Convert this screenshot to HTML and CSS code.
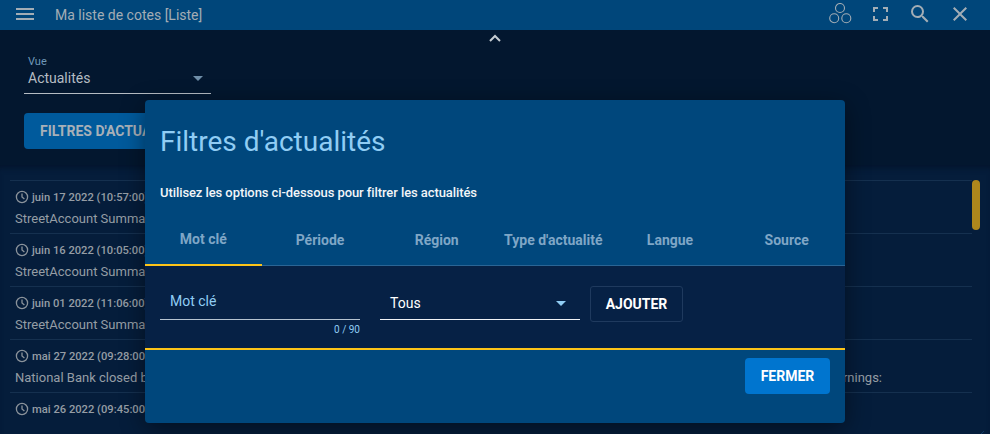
FILE: index.html
```html
<!DOCTYPE html>
<html lang="fr">
<head>
<meta charset="utf-8">
<title>Ma liste de cotes</title>
<link rel="stylesheet" href="styles.css">
</head>
<body>
<div class="app">
  <header class="topbar">
    <svg class="menu" width="20" height="14" viewBox="0 0 20 14"><path d="M1 2h18M1 7h18M1 12h18" stroke="#a3adb5" stroke-width="2"/></svg>
    <span class="topbar-title">Ma liste de cotes [Liste]</span>
    <div class="topbar-icons">
      <svg width="24" height="24" viewBox="0 0 24 24" fill="none" stroke="#a3adb5" stroke-width="1.1"><circle cx="12" cy="5" r="4.5"/><circle cx="6.2" cy="15.2" r="4.5"/><circle cx="18.3" cy="15.2" r="4.5"/></svg>
      <svg width="24" height="24" viewBox="0 0 24 24" fill="none" stroke="#a3adb5" stroke-width="2"><path d="M6 9V5h4M15 5h4v4M19 13v4h-4M10 17H6v-4"/></svg>
      <svg width="24" height="24" viewBox="0 1 24 24" fill="#a3adb5"><path d="M15.5 14h-.79l-.28-.27A6.47 6.47 0 0 0 16 9.5 6.5 6.5 0 1 0 9.5 16c1.61 0 3.09-.59 4.23-1.57l.27.28v.79l5 4.99L20.49 19l-4.99-5zm-6 0C7.01 14 5 11.99 5 9.5S7.01 5 9.5 5 14 7.01 14 9.5 11.99 14 9.5 14z"/></svg>
      <svg width="24" height="24" viewBox="0 1 24 24" fill="#a3adb5"><path d="M19 6.41 17.59 5 12 10.59 6.41 5 5 6.41 10.59 12 5 17.59 6.41 19 12 13.41 17.59 19 19 17.59 13.41 12z"/></svg>
    </div>
  </header>

  <section class="controls">
    <svg class="collapse" width="14" height="8" viewBox="0 0 14 8" fill="none" stroke="#c5ccd2" stroke-width="2"><path d="M2 7l5-5 5 5"/></svg>
    <div class="view-select">
      <span class="view-label">Vue</span>
      <div class="view-value"><span>Actualités</span><i class="caret caret-dim"></i></div>
    </div>
    <button class="filter-btn">FILTRES D'ACTUALITÉS</button>
  </section>

  <section class="news">
    <div class="rows">
      <article class="row">
        <div class="row-date"><svg class="clock" width="14" height="14" viewBox="0 0 14 14" fill="none" stroke="#8b939b" stroke-width="1.3"><circle cx="7" cy="7" r="5.6"/><path d="M7 3.6V7l2.4 2"/></svg>juin 17 2022 (10:57:00)</div>
        <div class="row-title">StreetAccount Summary</div>
      </article>
      <article class="row">
        <div class="row-date"><svg class="clock" width="14" height="14" viewBox="0 0 14 14" fill="none" stroke="#8b939b" stroke-width="1.3"><circle cx="7" cy="7" r="5.6"/><path d="M7 3.6V7l2.4 2"/></svg>juin 16 2022 (10:05:00)</div>
        <div class="row-title">StreetAccount Summary</div>
      </article>
      <article class="row">
        <div class="row-date"><svg class="clock" width="14" height="14" viewBox="0 0 14 14" fill="none" stroke="#8b939b" stroke-width="1.3"><circle cx="7" cy="7" r="5.6"/><path d="M7 3.6V7l2.4 2"/></svg>juin 01 2022 (11:06:00)</div>
        <div class="row-title">StreetAccount Summary</div>
      </article>
      <article class="row">
        <div class="row-date"><svg class="clock" width="14" height="14" viewBox="0 0 14 14" fill="none" stroke="#8b939b" stroke-width="1.3"><circle cx="7" cy="7" r="5.6"/><path d="M7 3.6V7l2.4 2"/></svg>mai 27 2022 (09:28:00)</div>
        <div class="row-title row-title-split"><span>National Bank closed by</span><span>earnings:</span></div>
      </article>
      <article class="row">
        <div class="row-date"><svg class="clock" width="14" height="14" viewBox="0 0 14 14" fill="none" stroke="#8b939b" stroke-width="1.3"><circle cx="7" cy="7" r="5.6"/><path d="M7 3.6V7l2.4 2"/></svg>mai 26 2022 (09:45:00)</div>
      </article>
    </div>
    <div class="scrollbar"></div>
    <svg class="resize" width="10" height="10" viewBox="0 0 10 10" fill="none" stroke="#0d3a66" stroke-width="1"><path d="M1 9l8-8M5 9l4-4"/></svg>
  </section>

  <div class="modal">
    <h1 class="modal-title">Filtres d'actualités</h1>
    <p class="modal-sub">Utilisez les options ci-dessous pour filtrer les actualités</p>
    <nav class="tabs">
      <span class="tab tab-active">Mot clé</span>
      <span class="tab">Période</span>
      <span class="tab">Région</span>
      <span class="tab">Type d'actualité</span>
      <span class="tab">Langue</span>
      <span class="tab">Source</span>
    </nav>
    <div class="modal-body">
      <div class="field">
        <div class="field-input">Mot clé</div>
        <div class="field-count">0 / 90</div>
      </div>
      <div class="scope"><span>Tous</span><i class="caret caret-bright"></i></div>
      <button class="add-btn">AJOUTER</button>
    </div>
    <footer class="modal-foot"><button class="close-btn">FERMER</button></footer>
  </div>
</div>
</body>
</html>
```
FILE: styles.css
```css
* { box-sizing: border-box; }
html, body { margin: 0; height: 100%; }
body { font-family: Roboto, "Liberation Sans", sans-serif; background: #03172f; overflow: hidden; }
button { font-family: inherit; border: 0; padding: 0; }

.app { position: relative; width: 990px; height: 434px; overflow: hidden; display: flex; flex-direction: column; }

.topbar { flex: none; height: 30px; background: #00467a; display: flex; align-items: center; padding-left: 15px; color: #a3adb5; }
.menu { flex: none; margin-top: -2px; }
.topbar-title { margin-left: 20px; font-size: 14px; }
.topbar-icons { margin-left: auto; display: flex; align-items: center; gap: 16px; padding-right: 18px; }
.topbar-icons svg { display: block; }

.controls { position: relative; flex: none; height: 135px; padding: 26px 24px 0; background: #03172f; }
.collapse { position: absolute; left: 488px; top: 4px; }
.view-select { width: 187px; height: 38px; border-bottom: 1px solid #b5bcc3; padding-left: 4px; }
.view-label { display: block; font-size: 11px; line-height: 12px; color: #6f97b8; }
.view-value { display: flex; justify-content: space-between; align-items: center; height: 20px; padding-right: 8px; font-size: 14px; color: #b5bcc3; }
.caret { display: block; width: 0; height: 0; border-left: 5px solid transparent; border-right: 5px solid transparent; border-top: 5px solid; }
.caret-dim { color: #6f8ea8; }
.caret-bright { color: #90cdf4; }
.filter-btn { display: block; margin-top: 19px; width: 200px; height: 36px; border-radius: 4px; background: #005a9c; color: #a8b0b8; font-size: 14px; font-weight: 700; text-align: left; padding-left: 16px; white-space: nowrap; overflow: hidden; }

.news { position: relative; flex: 1; background: #051d3b; padding: 15px 18px 0 10px; box-shadow: inset 0 6px 6px -4px #03132a; }
.rows { display: flex; flex-direction: column; }
.row { height: 53px; border-top: 1px solid #15304f; padding: 8px 0 0 5px; color: #959da5; }
.row-date { display: flex; align-items: center; gap: 3px; height: 16px; font-size: 11.2px; font-weight: 500; }
.clock { flex: none; }
.row-title { margin-top: 5px; font-size: 13px; line-height: 18px; font-weight: 400; }
.row-title-split { display: flex; justify-content: space-between; padding-right: 90px; }
.scrollbar { position: absolute; left: 972px; top: 15px; width: 8px; height: 50px; border-radius: 4px; background: #ae871c; }
.resize { position: absolute; right: 5px; bottom: 5px; }

.modal { position: absolute; left: 145px; top: 100px; width: 700px; height: 323px; border-radius: 4px; background: #00477c; box-shadow: 0 6px 24px rgba(0,0,0,.45); display: flex; flex-direction: column; overflow: hidden; }
.modal-title { margin: 26px 0 0 15px; font-size: 28px; line-height: 32px; font-weight: 400; color: #90cdf4; }
.modal-sub { margin: 27px 0 0 15px; font-size: 13px; line-height: 16px; font-weight: 500; letter-spacing: -0.08px; color: #f2f5f8; }
.tabs { display: flex; height: 50px; margin-top: 15px; border-bottom: 1px solid #2a6595; }
.tab { flex: 1; display: flex; align-items: center; justify-content: center; padding-bottom: 2px; font-size: 14px; font-weight: 700; color: #7fa6c6; }
.tab-active { height: 50px; border-bottom: 2px solid #fcc419; }
.modal-body { flex: none; height: 84px; background: #062145; border-bottom: 2px solid #fcc419; display: flex; align-items: flex-start; padding-left: 15px; }
.field { width: 200px; margin-top: 19px; }
.field-input { height: 35px; border-bottom: 1px solid #b5c3d0; padding: 8px 0 0 10px; font-size: 14px; line-height: 16px; color: #90cdf4; }
.field-count { margin-top: 4px; font-size: 10px; line-height: 12px; text-align: right; color: #90cdf4; }
.scope { width: 200px; height: 35px; margin: 19px 0 0 20px; border-bottom: 1px solid #f0f3f6; padding: 2px 14px 0 10px; display: flex; justify-content: space-between; align-items: center; font-size: 14px; color: #fff; }
.add-btn { width: 93px; height: 36px; margin: 20px 0 0 10px; background: #062145; border: 1px solid #1f3a5e; border-radius: 3px; color: #fff; font-size: 14px; font-weight: 700; }
.modal-foot { flex: 1; display: flex; justify-content: flex-end; align-items: flex-start; padding: 8px 15px 0 0; }
.close-btn { width: 85px; height: 36px; border-radius: 4px; background: #0075cf; color: #fff; font-size: 14px; font-weight: 700; }
```
